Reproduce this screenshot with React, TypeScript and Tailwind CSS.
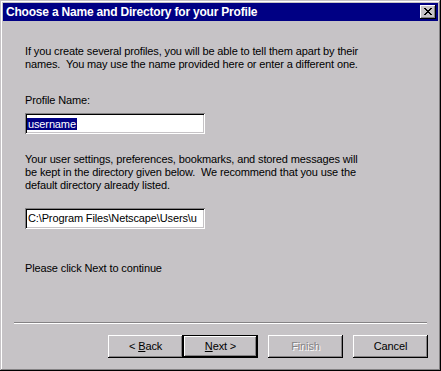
import React from "react";

const raised =
  "shadow-[inset_-1px_-1px_#000,inset_1px_1px_#fff,inset_-2px_-2px_#848284,inset_2px_2px_#c6c3c6]";
const sunken =
  "shadow-[inset_1px_1px_#848284,inset_-1px_-1px_#fff,inset_2px_2px_#000,inset_-2px_-2px_#c6c3c6]";

function Btn({ children, def, disabled }: { children: React.ReactNode; def?: boolean; disabled?: boolean }) {
  const inner = (
    <div
      className={`flex items-center justify-center bg-[#c6c3c6] ${raised} ${
        def ? "w-[73px] h-[21px]" : "w-[75px] h-[23px]"
      } ${disabled ? "text-[#848284] [text-shadow:1px_1px_0_#fff]" : "text-black"}`}
    >
      {children}
    </div>
  );
  if (def) return <div className="border border-black">{inner}</div>;
  return inner;
}

export default function App() {
  return (
    <div
      className="w-[441px] h-[371px] bg-[#c6c3c6] text-black text-[11px] leading-[13px] tracking-[-0.13px]"
      style={{ fontFamily: '"Liberation Sans", Arial, sans-serif' }}
    >
      <div className="w-full h-full flex flex-col p-[3px] shadow-[inset_-1px_-1px_#000,inset_1px_1px_#c6c3c6,inset_-2px_-2px_#848284,inset_2px_2px_#fff]">
        <div className="h-[18px] bg-[#000084] flex items-center justify-between pl-[3px] pr-[2px]">
          <span className="text-white font-bold text-[12px] tracking-[-0.2px]">
            Choose a Name and Directory for your Profile
          </span>
          <div className={`w-[16px] h-[14px] bg-[#c6c3c6] ${raised} flex items-center justify-center`}>
            <svg width="8" height="7" viewBox="0 0 8 7" shapeRendering="crispEdges" className="mt-[-1px] ml-[-1px]">
              <path
                d="M0 0h2v1H0zM6 0h2v1H6zM1 1h2v1H1zM5 1h2v1H5zM2 2h4v1H2zM3 3h2v1H3zM2 4h4v1H2zM1 5h2v1H1zM5 5h2v1H5zM0 6h2v1H0zM6 6h2v1H6z"
                fill="#000"
              />
            </svg>
          </div>
        </div>
        <div className="flex-1 flex flex-col">
          <div className="pl-[22px] flex flex-col">
            <p className="mt-[24px]">
              If you create several profiles, you will be able to tell them apart by their
              <br />
              names.&nbsp; You may use the name provided here or enter a different one.
            </p>
            <p className="mt-[23px]">Profile Name:</p>
            <div className={`mt-[6px] w-[180px] h-[21px] bg-white ${sunken} flex items-center pl-[2px]`}>
              <span className="bg-[#000084] text-white px-[1px] leading-[12px]">username</span>
            </div>
            <p className="mt-[19px]">
              Your user settings, preferences, bookmarks, and stored messages will
              <br />
              be kept in the directory given below.&nbsp; We recommend that you use the
              <br />
              default directory already listed.
            </p>
            <div className={`mt-[16px] w-[180px] h-[21px] bg-white ${sunken} flex items-center pl-[3px] whitespace-nowrap`}>
              <span>C:\Program Files\Netscape\Users\u</span>
            </div>
            <p className="mt-[33px]">Please click Next to continue</p>
          </div>
          <div className="mt-[47px] ml-[11px] w-[413px] h-[2px] border-t border-[#848284] border-b border-b-white" />
          <div className="mt-[11px] flex justify-end pr-[10px] gap-[10px]">
            <div className="flex">
              <Btn>
                &lt; <span className="underline underline-offset-[1px] ml-[3px]">B</span>ack
              </Btn>
              <Btn def>
                <span className="underline underline-offset-[1px]">N</span>ext &gt;
              </Btn>
            </div>
            <Btn disabled>Finish</Btn>
            <Btn>Cancel</Btn>
          </div>
        </div>
      </div>
    </div>
  );
}
